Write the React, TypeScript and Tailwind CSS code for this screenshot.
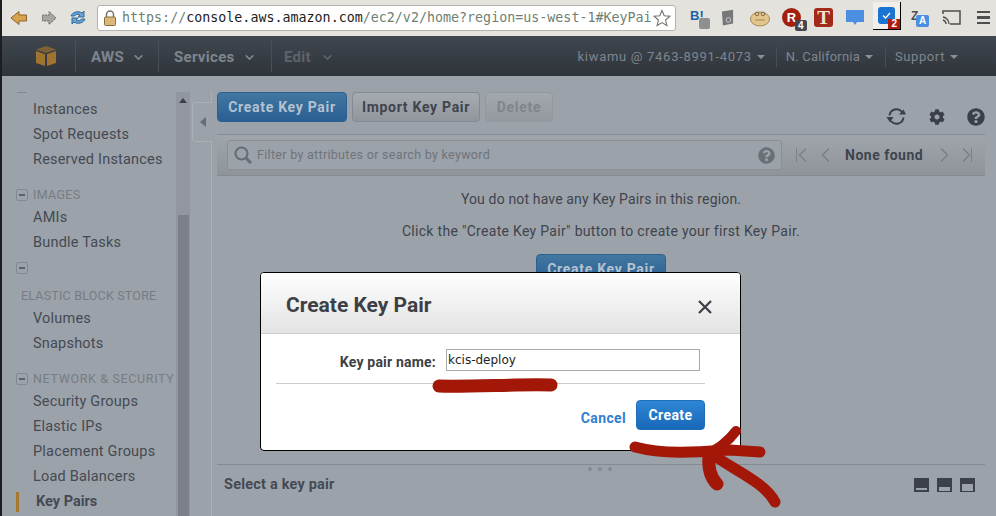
import { FaCog, FaQuestionCircle } from "react-icons/fa";
import { ChevronDown } from "lucide-react";

const Caret = () => <span className="ml-[5px] h-0 w-0 border-x-[4px] border-t-[4px] border-x-transparent border-t-[#8b9099]" />;

function BrowserBar() {
  return (
    <header className="flex h-[36px] shrink-0 items-center bg-[#e4e2dd] pb-[1px] pl-[8px]">
      {/* back / forward / reload */}
      <svg width="18" height="16" viewBox="0 0 18 16" className="mr-[13px]">
        <path d="M1 8 9 1.500V5h7.500v6H9v3.500z" fill="#d9a24f" stroke="#8a6426" strokeWidth="1" />
      </svg>
      <svg width="16" height="16" viewBox="0 0 16 16" className="mr-[12px]">
        <path d="M15 8 8 1.500V5H1.500v6H8v3.500z" fill="#a8a6a0" stroke="#66645f" strokeWidth="1" strokeDasharray="2 1" />
      </svg>
      <svg width="18" height="17" viewBox="0 0 18 17" className="mr-[10px]">
        <path d="M2 7a7 6 0 0 1 11-3l2-2v6h-6l2-2a4.500 4 0 0 0-6 1z" fill="#6aa3cf" stroke="#2c6c9d" />
        <path d="M16 10a7 6 0 0 1-11 3l-2 2V9h6l-2 2a4.500 4 0 0 0 6-1z" fill="#6aa3cf" stroke="#2c6c9d" />
      </svg>
      <div className="flex h-[26px] w-[579px] shrink-0 items-center overflow-hidden rounded-[3px] border border-[#b5b3ae] bg-white pl-[6px]">
        <svg width="12" height="16" viewBox="0 0 12 16" className="mr-[6px] shrink-0">
          <path d="M2.500 7V4.500a3.500 3.500 0 0 1 7 0V7" fill="none" stroke="#77726a" strokeWidth="1.500" />
          <rect x="0.500" y="7" width="11" height="8.500" rx="1" fill="#dcb878" stroke="#86703f" />
        </svg>
        <div className="w-[531px] shrink-0 whitespace-nowrap font-['DejaVu_Sans_Mono',monospace] text-[13.33px] text-[#6f7f73]">
          https://<span className="text-[#1d1d1d]">console.aws.amazon.com</span>/ec2/v2/home?region=us-west-1#KeyPai
        </div>
        <svg width="18" height="18" viewBox="0 0 24 24" className="shrink-0">
          <path d="m12 2 3 7 7.500.7-5.700 5 1.700 7.300-6.500-3.900L5.500 22l1.700-7.300-5.700-5L9 9z" fill="#fff" stroke="#77756f" strokeWidth="1.500" />
        </svg>
      </div>
      {/* extension icons */}
      <div className="relative ml-[14px] flex h-[20px] w-[22px] shrink-0 items-start">
        <span className="font-['Liberation_Sans',sans-serif] text-[13px] leading-[15px] font-bold text-[#1d62a8]">B!</span>
        <span className="absolute top-[10px] left-[9px] h-[11px] w-[11px] rounded-[2px] bg-[#8d8f90]" />
      </div>
      <svg width="13" height="18" viewBox="0 0 14 18" className="ml-[9px] shrink-0">
        <path d="M1 2 13 0v15L2 17z" fill="#77777a" />
        <circle cx="8" cy="11" r="2.500" fill="none" stroke="#ccc" />
      </svg>
      <svg width="22" height="18" viewBox="0 0 22 18" className="ml-[15px] shrink-0">
        <ellipse cx="11" cy="10" rx="9.500" ry="7" fill="#e3c68c" stroke="#a2895a" />
        <circle cx="8" cy="5" r="1.800" fill="#e3c68c" stroke="#5b4a2b" strokeWidth="0.700" />
        <circle cx="14" cy="5" r="1.800" fill="#e3c68c" stroke="#5b4a2b" strokeWidth="0.700" />
        <path d="M6 11h10" stroke="#a2895a" />
      </svg>
      <div className="relative ml-[11px] flex h-[19px] w-[19px] shrink-0 items-center justify-center rounded-full bg-[#a3200f] font-['Liberation_Sans',sans-serif] text-[13px] font-bold text-white">
        R
        <span className="absolute top-[12px] left-[13px] rounded-[2px] bg-[#44474b] px-[3px] text-[10px] leading-[11px] text-white">4</span>
      </div>
      <div className="ml-[13px] flex h-[19px] w-[19px] shrink-0 items-center justify-center rounded-[3px] bg-[#a3291a] font-['Liberation_Serif',serif] text-[19px] leading-none font-bold text-[#f3e4cf]">T</div>
      <svg width="18" height="17" viewBox="0 0 18 17" className="ml-[13px] shrink-0">
        <path d="M0 1h18v12h-7l-2 3-2-3H0z" fill="#4a8fe2" />
      </svg>
      <div className="relative mt-[-4px] ml-[9px] flex h-[28px] w-[28px] shrink-0 items-center justify-center border-r border-b border-black bg-[#f1efec]">
        <div className="flex h-[17px] w-[17px] items-center justify-center rounded-[3px] bg-[#1b74d2]">
          <svg width="9" height="7" viewBox="0 0 9 7">
            <path d="m1 3.500 2.500 2.500L8 1" fill="none" stroke="#fff" strokeWidth="1.300" />
          </svg>
        </div>
        <span className="absolute right-0 bottom-0 bg-[#b01c10] px-[3px] font-['Liberation_Sans',sans-serif] text-[10px] leading-[10px] font-bold text-white">2</span>
      </div>
      <div className="relative ml-[10px] h-[18px] w-[18px] shrink-0">
        <span className="absolute top-[-2px] left-0 font-['Liberation_Sans',sans-serif] text-[12px] font-bold text-[#4d4d4d]">Z</span>
        <span className="absolute top-[6px] left-[5px] flex h-[12px] w-[13px] items-center justify-center rounded-[2px] bg-[#4a8fe2] font-['Liberation_Sans',sans-serif] text-[10px] font-bold text-white">A</span>
      </div>
      <svg width="19" height="15" viewBox="0 0 19 15" className="ml-[13px] shrink-0">
        <path d="M1 4V1h17v13H8" fill="none" stroke="#4e4e4e" strokeWidth="1.500" />
        <path d="M1 7a7 7 0 0 1 6 7M1 10a4 4 0 0 1 3 4" fill="none" stroke="#4e4e4e" strokeWidth="1.300" />
      </svg>
      <div className="ml-[16px] flex w-[13px] shrink-0 flex-col gap-[3px]">
        <span className="h-[2.500px] bg-[#4e4e4e]" />
        <span className="h-[2.500px] bg-[#4e4e4e]" />
        <span className="h-[2.500px] bg-[#4e4e4e]" />
      </div>
    </header>
  );
}

function ConsoleNav() {
  return (
    <nav className="flex h-[40px] shrink-0 items-center bg-gradient-to-b from-[#41474f] to-[#2f343b] font-['Roboto',sans-serif]">
      <div className="flex h-[32px] w-[74px] items-center justify-center border-r border-[#4a4f57] pl-[14px]">
        <svg width="20" height="20" viewBox="0 0 20 20">
          <path d="M10 0 20 3.500 10 7 0 3.500z" fill="#7c6235" />
          <path d="M0 5l9 3.200V20l-9-3z" fill="#a0742f" />
          <path d="M20 5l-9 3.200V20l9-3z" fill="#a0742f" />
        </svg>
      </div>
      <div className="flex h-[32px] w-[83px] items-center border-r border-[#4a4f57] pt-[2px] pl-[15px] text-[15px] font-bold tracking-[0.3px] text-[#7f858e]">
        AWS
        <ChevronDown size={13} strokeWidth={3} className="ml-[8px] text-[#7f858e]" />
      </div>
      <div className="flex h-[32px] w-[113px] items-center border-r border-[#4a4f57] pt-[2px] pl-[15px] text-[15px] font-bold tracking-[0.3px] text-[#7f858e]">
        Services
        <ChevronDown size={13} strokeWidth={3} className="ml-[8px] text-[#7f858e]" />
      </div>
      <div className="flex items-center pt-[2px] pl-[12px] text-[15px] font-bold tracking-[0.3px] text-[#5e636b]">
        Edit
        <ChevronDown size={13} strokeWidth={3} className="ml-[10px] text-[#5e636b]" />
      </div>
      <div className="ml-auto flex items-center pt-[2px] text-[13px] text-[#7f858e]">
        <div className="flex h-[20px] items-center border-r border-[#4a4f57] pr-[11px] tracking-[0.7px]">kiwamu @ 7463-8991-4073<Caret /></div>
        <div className="flex h-[20px] items-center border-r border-[#4a4f57] pr-[12px] pl-[9px] tracking-[0.2px]">N. California<Caret /></div>
        <div className="flex h-[20px] items-center pr-[38px] pl-[9px] tracking-[0.6px]">Support<Caret /></div>
      </div>
    </nav>
  );
}

const Minus = () => (
  <span className="mr-[5px] flex h-[12px] w-[12px] items-center justify-center rounded-[2px] border border-[#858a92]">
    <span className="h-[2px] w-[6px] bg-[#5d626b]" />
  </span>
);

const Item = ({ label }: { label: string }) => (
  <div className="flex h-[25px] items-center pl-[31px] text-[14.5px] tracking-[0.2px] text-[#444a54]">{label}</div>
);

const GroupHead = ({ label, className }: { label: string; className: string }) => (
  <div className={`flex h-[20px] items-center pl-[14px] text-[12.500px] whitespace-nowrap text-[#777c84] ${className}`}>
    <Minus />
    {label}
  </div>
);

function Sidebar() {
  return (
    <aside className="relative flex w-[190px] shrink-0 font-['Roboto',sans-serif]">
      <div className="w-[174px] shrink-0">
        <div className="mt-[16px] ml-[15px] h-px w-[10px] bg-[#858a92]" />
        <div className="mt-[4px]">
          <Item label="Instances" />
          <Item label="Spot Requests" />
          <Item label="Reserved Instances" />
        </div>
        <GroupHead label="IMAGES" className="mt-[13px] tracking-[0.3px]" />
        <Item label="AMIs" />
        <Item label="Bundle Tasks" />
        <div className="mt-[3px] flex h-[20px] items-center pl-[14px]"><Minus /></div>
        <div className="mt-[8px] flex h-[20px] items-center pl-[19px] text-[12.500px] tracking-[0.2px] whitespace-nowrap text-[#777c84]">ELASTIC BLOCK STORE</div>
        <Item label="Volumes" />
        <Item label="Snapshots" />
        <GroupHead label="NETWORK & SECURITY" className="mt-[13px] tracking-[0.65px]" />
        <Item label="Security Groups" />
        <Item label="Elastic IPs" />
        <Item label="Placement Groups" />
        <Item label="Load Balancers" />
        <div className="relative flex h-[25px] items-center pl-[34px] text-[14.5px] font-bold text-[#444a54]">
          <span className="absolute top-[3px] left-[14px] h-[20px] w-[3px] bg-[#a8782f]" />
          Key Pairs
        </div>
      </div>
      {/* scrollbar */}
      <div className="mt-[16px] flex w-[14px] shrink-0 flex-col items-center bg-[#92979f] px-[1px]">
        <span className="mt-[6px] h-0 w-0 border-x-[4px] border-b-[5px] border-x-transparent border-b-[#3c4149]" />
        <div className="mt-[112px] w-[11px] flex-1 bg-[#7c8089]" />
      </div>
    </aside>
  );
}

function Toggle() {
  return (
    <div className="flex w-[25px] shrink-0">
      <div className="flex w-[20px] flex-col pt-[16px]">
        <div className="h-[10px] border-r border-[#abb0b6]" />
        <div className="flex h-[40px] items-center justify-center rounded-l-[4px] border border-r-0 border-[#abb0b6]">
          <span className="h-0 w-0 border-y-[5px] border-r-[6px] border-y-transparent border-r-[#676c74]" />
        </div>
        <div className="flex-1 border-r border-[#abb0b6]" />
      </div>
    </div>
  );
}

function RefreshIcon() {
  return (
    <svg width="21" height="21" viewBox="0 0 21 21" fill="none">
      <path d="M3.500 9.500A7 7 0 0 1 16 6" stroke="#3a3f48" strokeWidth="2" />
      <path d="M13 8.500h7l-2.500-5z" fill="#3a3f48" />
      <path d="M17.500 11.500A7 7 0 0 1 5 15" stroke="#3a3f48" strokeWidth="2" />
      <path d="M0.500 11h7l-3.500 5.500z" fill="#3a3f48" />
    </svg>
  );
}

function Toolbar() {
  return (
    <div className="flex h-[42px] shrink-0 items-start pt-[16px] text-[14px] font-bold tracking-[0.7px]">
      <button className="flex h-[30px] w-[130px] items-center justify-center rounded-[4px] border border-[#2d5f92] bg-gradient-to-b from-[#41779f] to-[#2a5f94] text-[#b4c2d0]">Create Key Pair</button>
      <button className="ml-[5px] flex h-[30px] w-[128px] items-center justify-center rounded-[4px] border border-[#858a92] bg-gradient-to-b from-[#a6abb2] to-[#91969d] text-[#3f444d]">Import Key Pair</button>
      <button className="ml-[5px] flex h-[30px] w-[68px] items-center justify-center rounded-[4px] border border-[#93989f] bg-gradient-to-b from-[#a3a8ae] to-[#94999f] text-[#80858c]">Delete</button>
      <div className="mt-[14px] ml-auto flex items-center gap-[22px]">
        <RefreshIcon />
        <FaCog size={16} className="text-[#3a3f48]" />
        <FaQuestionCircle size={18} className="text-[#3a3f48]" />
      </div>
    </div>
  );
}

const PageArrow = ({ dir, className }: { dir: "left" | "right"; className: string }) => (
  <svg width="9" height="14" viewBox="0 0 9 14" fill="none" className={className}>
    <path d={dir === "left" ? "M8 .5 1.500 7 8 13.500" : "M1 .5 7.500 7 1 13.500"} stroke="#7b8087" strokeWidth="1.500" />
  </svg>
);

function FilterBar() {
  return (
    <div className="mt-[16px] flex h-[42px] shrink-0 items-center border-y border-[#858a92] bg-gradient-to-b from-[#a0a5ac] to-[#8f949b] pl-[10px]">
      <div className="flex h-[30px] w-[555px] items-center rounded-[3px] border border-[#8b9097] bg-[#9ca2a9] px-[6px]">
        <svg width="18" height="18" viewBox="0 0 18 18" fill="none" className="mr-[5px]">
          <circle cx="7.500" cy="7.500" r="6" stroke="#676c74" strokeWidth="2" />
          <path d="m12 12 5 5" stroke="#676c74" strokeWidth="3" />
        </svg>
        <span className="text-[12.500px] tracking-[0.3px] text-[#6f747b]">Filter by attributes or search by keyword</span>
        <FaQuestionCircle size={17} className="ml-auto text-[#6b7077]" />
      </div>
      <div className="ml-[14px] flex items-center">
        <span className="h-[14px] w-px bg-[#7b8087]" />
        <PageArrow dir="left" className="ml-[1px]" />
        <PageArrow dir="left" className="ml-[14px]" />
      </div>
      <span className="ml-[15px] w-[79px] text-[14px] font-bold tracking-[0.5px] whitespace-nowrap text-[#3f444d]">None found</span>
      <div className="ml-[16px] flex items-center">
        <PageArrow dir="right" className="" />
        <PageArrow dir="right" className="ml-[13px]" />
        <span className="h-[14px] w-px bg-[#7b8087]" />
      </div>
    </div>
  );
}

function MainPanel() {
  return (
    <main className="flex w-[768px] shrink-0 flex-col font-['Roboto',sans-serif]">
      <Toolbar />
      <FilterBar />
      <div className="flex flex-col items-center pt-[14px] text-[14px] text-[#3f444d]">
        <p className="h-[18px] leading-[18px] tracking-[0.15px]">You do not have any Key Pairs in this region.</p>
        <p className="mt-[14px] h-[18px] leading-[18px] tracking-[0.3px]">Click the "Create Key Pair" button to create your first Key Pair.</p>
        <button className="mt-[14px] flex h-[30px] w-[130px] items-center justify-center rounded-[4px] border border-[#2d5f92] bg-gradient-to-b from-[#41779f] to-[#2a5f94] font-bold tracking-[0.7px] text-[#b4c2d0]">Create Key Pair</button>
      </div>
      <div className="mt-[180px] flex h-[40px] shrink-0 items-center border-t border-[#858a92] pl-[7px]">
        <span className="text-[14.5px] font-bold tracking-[0.2px] text-[#444a54]">Select a key pair</span>
        <div className="ml-auto flex gap-[8px] pr-[10px]">
          <div className="flex h-[14px] w-[15px] items-end justify-center bg-[#3c4149] pb-[2px]"><span className="h-[2px] w-[11px] bg-[#9ca2a9]" /></div>
          <div className="flex h-[14px] w-[15px] items-end justify-center bg-[#3c4149] pb-[1px]"><span className="h-[4px] w-[11px] bg-[#9ca2a9]" /></div>
          <div className="flex h-[14px] w-[15px] items-end justify-center bg-[#3c4149] pb-[1px]"><span className="h-[7px] w-[11px] bg-[#9ca2a9]" /></div>
        </div>
      </div>
    </main>
  );
}

function KeyPairDialog() {
  return (
    <div className="absolute top-[272px] left-[260px] z-10 h-[179px] w-[481px] overflow-hidden rounded-[4px] border border-black bg-white font-['Roboto',sans-serif]">
      <div className="flex h-[61px] items-center justify-between border-b border-[#cccccc] bg-gradient-to-b from-white to-[#e3e3e3] pt-[5px] pr-[28px] pl-[25px]">
        <h2 className="text-[21px] font-bold text-[#3d3f45]">Create Key Pair</h2>
        <svg width="14" height="14" viewBox="0 0 14 14" className="mt-[2px]">
          <path d="m1 1 12 12M13 1 1 13" stroke="#3d3f45" strokeWidth="2.200" />
        </svg>
      </div>
      <div className="flex h-[49px] items-start justify-end pt-[15px] pr-[40px]">
        <label className="mt-[3px] mr-[10px] text-[14px] font-bold tracking-[0.2px] text-[#3d3f45]">Key pair name:</label>
        <div className="flex h-[22px] w-[254px] items-center border border-[#aaaaaa] pl-[1px] font-['DejaVu_Sans',sans-serif] text-[12px] text-[#222]">kcis-deploy</div>
      </div>
      <div className="mr-[35px] ml-[15px] h-px bg-[#cccccc]" />
      <div className="flex items-center justify-end pt-[16px] pr-[35px]">
        <a className="mt-[6px] mr-[10px] text-[14px] font-bold tracking-[0.35px] text-[#2f80d0]">Cancel</a>
        <button className="flex h-[30px] w-[69px] items-center justify-center rounded-[4px] border border-[#1f6fb8] bg-gradient-to-b from-[#2f86d6] to-[#1868b8] text-[14px] font-bold tracking-[0.4px] text-white">Create</button>
      </div>
    </div>
  );
}

// hand-drawn marks on top of the screenshot
function Scribbles() {
  return (
    <svg width="996" height="516" viewBox="0 0 996 516" fill="none" className="absolute inset-0 z-20">
      <g stroke="#a31708" strokeLinecap="round" strokeLinejoin="round">
        <path d="M439 386C470 387 520 384 551 385" strokeWidth="13" />
        <path d="M635 447C665 455 700 452 730 450L760 452" strokeWidth="11" />
        <path d="M736 431C728 442 718 448 708 454" strokeWidth="10" />
        <path d="M709 456C708 468 711 478 717 484" strokeWidth="13" />
        <path d="M712 454C730 468 765 482 775 502" strokeWidth="11" />
      </g>
      <g fill="#858a92">
        <circle cx="590" cy="469" r="2" />
        <circle cx="600" cy="469" r="2" />
        <circle cx="610" cy="469" r="2" />
      </g>
    </svg>
  );
}

export default function App() {
  return (
    <div className="relative flex h-[516px] w-[996px] overflow-hidden bg-[#9ca2a9]">
      <div className="w-[2px] shrink-0 bg-[#1d1d22]" />
      <div className="flex w-[994px] flex-col">
        <BrowserBar />
        <ConsoleNav />
        <div className="flex flex-1 overflow-hidden">
          <Sidebar />
          <Toggle />
          <MainPanel />
        </div>
      </div>
      <KeyPairDialog />
      <Scribbles />
    </div>
  );
}
